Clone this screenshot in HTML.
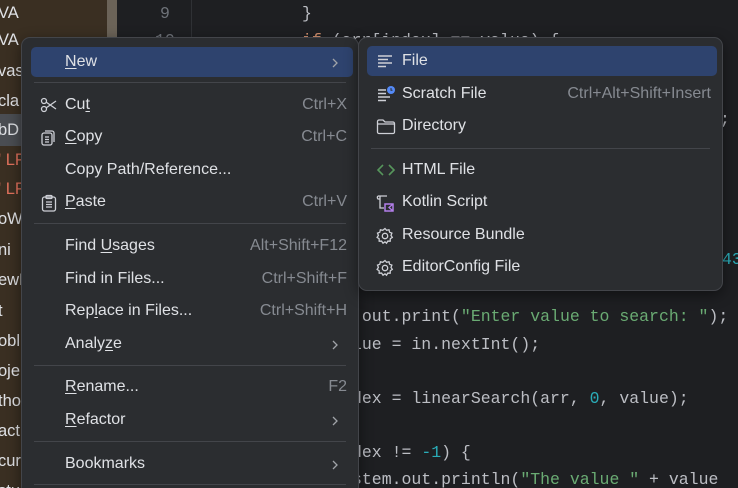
<!DOCTYPE html>
<html style="overflow:hidden;width:738px;height:488px"><head><meta charset="utf-8"><style>
*{margin:0;padding:0;box-sizing:border-box}
body{width:738px;height:488px;overflow:hidden;background:#1e1f22;font-family:"Liberation Sans",sans-serif;position:relative}
.side{position:absolute;left:0;top:0;width:107px;height:488px;background:#3a2f22}
.scroll{position:absolute;left:107px;top:0;width:10px;height:488px;background:#6b6358}
.gutline{position:absolute;left:191px;top:0;width:1px;height:488px;background:#2f3135}
.st{position:absolute;left:-2px;font-size:16.5px;color:#dfe1e5;height:32px;line-height:32px;width:107px}
.code{position:absolute;font-family:"Liberation Mono",monospace;font-size:16.5px;color:#bcbec4;white-space:pre;line-height:20px}
.menu{position:absolute;background:#2b2d30;border:1px solid #43454a;border-radius:9px;box-shadow:0 4px 14px rgba(0,0,0,.45);overflow:hidden}
.it{position:absolute;left:9px;right:5px;height:30px;line-height:30px;font-size:16px;color:#dfe1e5;border-radius:5px}
.it .t{position:absolute;left:34px}
.it .k{position:absolute;right:6px;color:#868a91}
.it .a{position:absolute;right:14px;top:10px}
.sel{background:#2e436e}
.sep{position:absolute;left:12px;right:12px;height:1px;background:#43454a}
u{text-decoration:underline;text-underline-offset:2px}
.ic{position:absolute;left:9px;top:7px}
.sub .it .t{left:35px}
</style></head><body>
<div class="side"></div>
<div class="scroll"></div>
<div class="st" style="top:-3px">VA</div>
<div class="st" style="top:24px">VA</div>
<div class="st" style="top:55px">vas</div>
<div class="st" style="top:85px">cla</div>
<div class="st" style="top:114px;background:#4a4d52">bD</div>
<div class="st" style="top:144px;color:#e0715c">' LP</div>
<div class="st" style="top:173px;color:#e0715c">' LP</div>
<div class="st" style="top:203px">oW</div>
<div class="st" style="top:234px">ni</div>
<div class="st" style="top:264px">ewP</div>
<div class="st" style="top:295px">t</div>
<div class="st" style="top:325px">obl</div>
<div class="st" style="top:355px">oje</div>
<div class="st" style="top:385px">tho</div>
<div class="st" style="top:415px">act</div>
<div class="st" style="top:445px">cur</div>
<div class="st" style="top:475px">stu</div>
<div class="gutline"></div>
<div class="code" style="left:160px;top:4px;color:#6f737a">9</div>
<div class="code" style="left:155px;top:31px;color:#6f737a">10</div>
<div class="code" style="left:302px;top:4px">}</div>
<div class="code" style="left:302px;top:31px"><span style="color:#cf8e6d">if</span> (arr[index] == value) {</div>
<div class="code" style="left:720px;top:110px">;</div>
<div class="code" style="left:722px;top:250px;color:#2aacb8">43</div>
<div class="code" style="left:352px;top:307px">.out.print(<span style="color:#6aab73">"Enter value to search: "</span>);</div>
<div class="code" style="left:352px;top:335px">lue = in.nextInt();</div>
<div class="code" style="left:352px;top:389px">dex = linearSearch(arr, <span style="color:#2aacb8">0</span>, value);</div>
<div class="code" style="left:352px;top:443px">dex != <span style="color:#2aacb8">-1</span>) {</div>
<div class="code" style="left:352px;top:470px">stem.out.println(<span style="color:#6aab73">"The value "</span> + value</div>

<div class="menu" style="left:21px;top:37px;width:338px;height:460px">
 <div class="it sel" style="top:9px"><span class="t"><u>N</u>ew</span><svg class="a" width="8" height="12" viewBox="0 0 8 12" fill="none" stroke="#a0a3a8" stroke-width="1.3"><path d="M2 2l4 4-4 4"/></svg></div>
 <div class="sep" style="top:44px"></div>
 <div class="it" style="top:52px"><svg class="ic" width="18" height="16" viewBox="0 0 18 16" fill="none" stroke="#ced0d6" stroke-width="1.3"><circle cx="4" cy="4" r="2.5"/><circle cx="4" cy="12" r="2.5"/><path d="M6 5 L16 12 M6 11 L16 4"/></svg><span class="t">Cu<u>t</u></span><span class="k">Ctrl+X</span></div>
 <div class="it" style="top:84px"><svg class="ic" width="18" height="18" viewBox="0 0 18 18" fill="none" stroke="#ced0d6" stroke-width="1.3"><rect x="2" y="4" width="10" height="12" rx="2"/><path d="M5 2 h7 a2 2 0 0 1 2 2 v9"/><path d="M5 8h4M5 10.5h4M5 13h4"/></svg><span class="t"><u>C</u>opy</span><span class="k">Ctrl+C</span></div>
 <div class="it" style="top:117px"><span class="t">Copy Path/Reference...</span></div>
 <div class="it" style="top:149px"><svg class="ic" width="18" height="18" viewBox="0 0 18 18" fill="none" stroke="#ced0d6" stroke-width="1.3"><rect x="2.5" y="3" width="13" height="14" rx="2"/><rect x="6" y="1.5" width="6" height="3" rx="1"/><path d="M6 8h6M6 10.5h6M6 13h6"/></svg><span class="t"><u>P</u>aste</span><span class="k">Ctrl+V</span></div>
 <div class="sep" style="top:185px"></div>
 <div class="it" style="top:193px"><span class="t">Find <u>U</u>sages</span><span class="k">Alt+Shift+F12</span></div>
 <div class="it" style="top:226px"><span class="t">Find in Files...</span><span class="k">Ctrl+Shift+F</span></div>
 <div class="it" style="top:258px"><span class="t">Rep<u>l</u>ace in Files...</span><span class="k">Ctrl+Shift+H</span></div>
 <div class="it" style="top:291px"><span class="t">Analy<u>z</u>e</span><svg class="a" width="8" height="12" viewBox="0 0 8 12" fill="none" stroke="#a0a3a8" stroke-width="1.3"><path d="M2 2l4 4-4 4"/></svg></div>
 <div class="sep" style="top:327px"></div>
 <div class="it" style="top:334px"><span class="t"><u>R</u>ename...</span><span class="k">F2</span></div>
 <div class="it" style="top:367px"><span class="t"><u>R</u>efactor</span><svg class="a" width="8" height="12" viewBox="0 0 8 12" fill="none" stroke="#a0a3a8" stroke-width="1.3"><path d="M2 2l4 4-4 4"/></svg></div>
 <div class="sep" style="top:403px"></div>
 <div class="it" style="top:411px"><span class="t">Bookmarks</span><svg class="a" width="8" height="12" viewBox="0 0 8 12" fill="none" stroke="#a0a3a8" stroke-width="1.3"><path d="M2 2l4 4-4 4"/></svg></div>
 <div class="sep" style="top:446px"></div>
</div>

<div class="menu sub" style="left:358px;top:37px;width:365px;height:254px">
 <div class="it sel" style="top:8px;left:8px"><svg class="ic" width="18" height="16" viewBox="0 0 18 16" fill="none" stroke="#ced0d6" stroke-width="1.4"><path d="M2 3h14M2 6.5h10M2 10h14M2 13.5h8"/></svg><span class="t">File</span></div>
 <div class="it" style="top:41px;left:8px"><svg class="ic" width="20" height="16" viewBox="0 0 20 16" fill="none" stroke="#ced0d6" stroke-width="1.4"><path d="M2 4h8M2 7.5h8M2 11h12M2 14.5h8"/><circle cx="15" cy="4" r="4" fill="#548af7" stroke="none"/><path d="M15 2v2.3h1.5" stroke="#2b2d30" stroke-width="1"/></svg><span class="t">Scratch File</span><span class="k">Ctrl+Alt+Shift+Insert</span></div>
 <div class="it" style="top:73px;left:8px"><svg class="ic" width="20" height="17" viewBox="0 0 20 17" fill="none" stroke="#ced0d6" stroke-width="1.3"><path d="M1.5 3.5a1.5 1.5 0 0 1 1.5-1.5h4l2 2h8a1.5 1.5 0 0 1 1.5 1.5v8.5a1.5 1.5 0 0 1-1.5 1.5h-14a1.5 1.5 0 0 1-1.5-1.5z"/><path d="M1.5 6h17"/></svg><span class="t">Directory</span></div>
 <div class="sep" style="top:110px"></div>
 <div class="it" style="top:117px;left:8px"><svg class="ic" width="20" height="16" viewBox="0 0 20 16" fill="none" stroke="#57965c" stroke-width="1.6"><path d="M7 3L2 8l5 5M13 3l5 5-5 5"/></svg><span class="t">HTML File</span></div>
 <div class="it" style="top:149px;left:8px"><svg class="ic" width="20" height="18" viewBox="0 0 20 18" fill="none" stroke="#ced0d6" stroke-width="1.3"><path d="M2 2h9M4 2v12h4"/><path d="M2 2a2 2 0 0 0 0 3h2"/><rect x="9" y="10" width="8" height="7" fill="none" stroke="#b37feb" stroke-width="1.5"/><path d="M17 10l-4 3.5 4 3.5" stroke="#b37feb" stroke-width="1.3"/></svg><span class="t">Kotlin Script</span></div>
 <div class="it" style="top:182px;left:8px"><svg class="ic" width="18" height="18" viewBox="0 0 18 18" fill="none" stroke="#ced0d6" stroke-width="1.3"><path d="M9 1.5l1.6 1.8 2.4-.5.6 2.4 2.3.9-.9 2.3 1.3 2-2 1.3-.1 2.5-2.4-.1-1.3 2.1-1.5-1.4-2 1.4-1.4-2.1-2.4.1-.1-2.5-2-1.3 1.3-2-.9-2.3 2.3-.9.6-2.4 2.4.5z"/><circle cx="9" cy="9" r="2.7"/></svg><span class="t">Resource Bundle</span></div>
 <div class="it" style="top:214px;left:8px"><svg class="ic" width="18" height="18" viewBox="0 0 18 18" fill="none" stroke="#ced0d6" stroke-width="1.3"><path d="M9 1.5l1.6 1.8 2.4-.5.6 2.4 2.3.9-.9 2.3 1.3 2-2 1.3-.1 2.5-2.4-.1-1.3 2.1-1.5-1.4-2 1.4-1.4-2.1-2.4.1-.1-2.5-2-1.3 1.3-2-.9-2.3 2.3-.9.6-2.4 2.4.5z"/><circle cx="9" cy="9" r="2.7"/></svg><span class="t">EditorConfig File</span></div>
</div>
</body></html>
